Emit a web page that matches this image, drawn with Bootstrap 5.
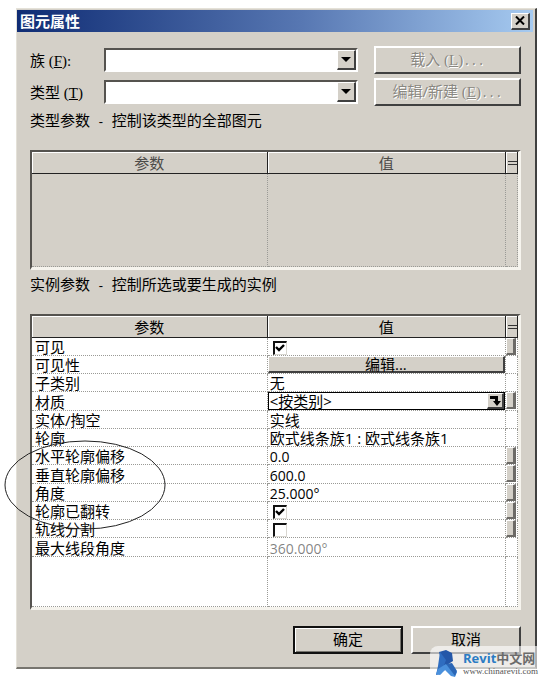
<!DOCTYPE html>
<html lang="zh-CN">
<head>
<meta charset="utf-8">
<meta name="viewport" content="width=device-width, initial-scale=1">
<title>图元属性</title>
<link href="https://cdn.jsdelivr.net/npm/bootstrap@5.3.0/dist/css/bootstrap.min.css" rel="stylesheet">
<style>
  :root { --face: #d4d0c8; --edge: #404040; --shade: #808080; --dots: #9a9a96; }
  body { background: #fff; color: #000; font: 15px/20px "Open Sans", "Noto Sans CJK SC", sans-serif; padding: 8px 11px 12px 16px; }
  .dialog-win { background: var(--face); border: solid; border-width: 1px 2px 2px 1px; border-color: #e4e1d8 var(--edge) #77756f #e4e1d8; }
  .title-strip { height: 22px; margin: 1px 2px 0 0; padding: 0 3px; background: linear-gradient(90deg, #0f2c74, #5777b2 55%, #a6caf0); color: #fff; }
  .title-strip h1 { font-size: 15px; line-height: 20px; font-weight: 700; }
  .dialog-body { padding: 14px 14px 13px 13px; }
  .raised { background: var(--face); color: #000; border: solid; border-width: 2px; border-color: #fff var(--edge) var(--edge) #fff; border-radius: 0; padding: 0; }
  .btn-close-x { width: 19px; height: 17px; border-width: 1px 2px 2px 1px; }
  .btn-close-x svg, .drop-arrow svg, .pick svg { display: block; margin: auto; }
  .field-label { width: 74px; }
  .latin { font-family: "Liberation Serif", serif; font-size: 15px; }
  .mono { font-family: "Liberation Mono", monospace; font-size: 12px; white-space: pre; }
  .combo { height: 24px; margin-right: 16px; }
  .combo select { appearance: none; width: 100%; height: 24px; background: #fff; border: solid; border-width: 2px; border-color: #55534f #fff #fff #55534f; border-radius: 0; }
  .drop-arrow { top: 2px; right: 2px; width: 19px; height: 20px; pointer-events: none; border-width: 1px 2px 2px 1px; }
  .side-btn { width: 147px; height: 28px; }
  .side-btn:disabled { color: #8a8882; text-shadow: 1px 1px 0 #fff; }
  .sunken { margin-top: 17px; border: solid; border-width: 2px 3px 3px 2px; border-color: #55534f #f6f4ee #f6f4ee #55534f; background: #fff; }
  .sunken.off { background: var(--face); }
  .off thead { color: #4c4b48; }
  .props { width: 100%; table-layout: fixed; border-collapse: separate; border-spacing: 0; }
  .props .c-name { width: 48.5%; }
  .props .c-eq { width: 12px; }
  .props th { height: 22px; line-height: 20px; font-weight: 400; text-align: center; padding: 0; background: var(--face); border: solid #222; border-width: 0 1px 1px 0; box-shadow: inset 1px 1px 0 #fff; }
  .props td { height: 18px; line-height: 15px; padding: 2px 0 0 2px; border: dotted var(--dots); border-width: 0 1px 1px 0; white-space: nowrap; }
  .props td:first-child { padding-left: 3px; }
  .props tbody tr:nth-child(4n) td { height: 19px; }
  .props td.num { font-size: 14px; }
  .props td.p-0 { vertical-align: top; }
  .props .filler td { height: 50px; }
  .off .filler td { height: 93px; }
  .eq-sign { display: block; height: 4px; margin-left: 2px; border: solid #333; border-width: 1px 0; }
  .assoc { display: block; width: 10px; height: 17px; border-width: 1px 3px 2px 1px; border-color: #fff #6c6a66 #6c6a66 #fff; }
  .edit-btn { display: block; width: 100%; height: 17px; line-height: 14px; border-width: 1px 2px 2px 1px; }
  .active-cell { border: 1px solid #000; height: 18px; }
  .active-cell input { border: 0; padding: 0 0 0 1px; min-width: 0; height: 16px; line-height: 16px; outline: 0; }
  .pick { width: 17px; height: 16px; border-width: 1px 2px 2px 1px; }
  .tick { appearance: none; display: block; width: 14px; height: 14px; margin: 0 0 0 3px; background: #fff center/10px 10px no-repeat; border: solid; border-width: 2px 1px 1px 2px; border-color: #111 #d8d6d0 #d8d6d0 #111; }
  .tick:checked { background-image: url("data:image/svg+xml,%3Csvg xmlns='http://www.w3.org/2000/svg' viewBox='0 0 10 10'%3E%3Cpath d='M1 4l3 3 5-5' fill='none' stroke='%23000' stroke-width='2.4'/%3E%3C/svg%3E"); }
  .cmd { width: 110px; height: 28px; padding-bottom: 2px; }
  .cmd.main { border-color: #111; box-shadow: inset 1px 1px 0 #fff, inset -1px -1px 0 #77756f; }
  .ring { left: -28px; top: 123px; width: 164px; height: 92px; pointer-events: none; }
  .brand { right: -2px; bottom: -13px; width: 107px; height: 34px; padding-left: 5px; background: rgba(255,255,255,.6); border-radius: 8px 0 0 0; }
  .brand-name { font: 700 13px/16px "Open Sans", "Noto Sans CJK SC", sans-serif; color: #2b7cc4; }
  .brand-name span { color: #6b6b6b; }
  .brand-url { font: 9px/10px "Liberation Serif", serif; color: #555; }
</style>
<script src="https://cdn.jsdelivr.net/npm/bootstrap@5.3.0/dist/js/bootstrap.bundle.min.js"></script>
</head>
<body>
<main class="dialog-win position-relative">
  <header class="title-strip d-flex align-items-center justify-content-between">
    <h1 class="m-0">图元属性</h1>
    <button type="button" class="raised btn-close-x" aria-label="关闭"><svg width="10" height="9" viewBox="0 0 10 9"><path d="M1 .5l8 8M9 .5l-8 8" stroke="#000" stroke-width="2"/></svg></button>
  </header>
  <div class="dialog-body">
    <div class="d-flex align-items-center">
      <label class="field-label" for="family">族<span class="latin"> (<u>F</u>):</span></label>
      <div class="combo position-relative flex-grow-1">
        <select id="family"><option></option></select>
        <span class="drop-arrow raised position-absolute d-flex align-items-center"><svg width="10" height="5" viewBox="0 0 10 5"><path d="M0 0h10L5 5z"/></svg></span>
      </div>
      <button type="button" class="raised side-btn" disabled>载入<span class="latin"> (<u>L</u>)</span><span class="mono">...</span></button>
    </div>
    <div class="d-flex align-items-center mt-1">
      <label class="field-label" for="kind">类型<span class="latin"> (<u>T</u>)</span></label>
      <div class="combo position-relative flex-grow-1">
        <select id="kind"><option></option></select>
        <span class="drop-arrow raised position-absolute d-flex align-items-center"><svg width="10" height="5" viewBox="0 0 10 5"><path d="M0 0h10L5 5z"/></svg></span>
      </div>
      <button type="button" class="raised side-btn" disabled>编辑/新建<span class="latin"> (<u>E</u>)</span><span class="mono">...</span></button>
    </div>
    <p class="mt-1 mb-0">类型参数<span class="mono"> - </span>控制该类型的全部图元</p>
    <div class="sunken off">
      <table class="props">
        <colgroup><col class="c-name"><col><col class="c-eq"></colgroup>
        <thead><tr><th>参数</th><th>值</th><th aria-label="关联"><span class="eq-sign"></span></th></tr></thead>
        <tbody><tr class="filler"><td></td><td></td><td></td></tr></tbody>
      </table>
    </div>
    <p class="mt-1 mb-0">实例参数<span class="mono"> - </span>控制所选或要生成的实例</p>
    <div class="sunken position-relative">
      <table class="props">
        <colgroup><col class="c-name"><col><col class="c-eq"></colgroup>
        <thead><tr><th>参数</th><th>值</th><th aria-label="关联"><span class="eq-sign"></span></th></tr></thead>
        <tbody>
          <tr><td><label for="visible">可见</label></td><td><input class="tick" type="checkbox" id="visible" checked></td><td class="p-0"><button type="button" class="raised assoc" aria-label="关联可见"></button></td></tr>
          <tr><td>可见性</td><td class="p-0"><button type="button" class="raised edit-btn">编辑...</button></td><td></td></tr>
          <tr><td>子类别</td><td>无</td><td></td></tr>
          <tr><td><label for="material">材质</label></td><td class="p-0"><div class="active-cell d-flex"><input class="flex-grow-1" type="text" id="material" value="&lt;按类别&gt;"><button type="button" class="raised pick" aria-label="选择材质"><svg width="12" height="11" viewBox="0 0 12 11"><path d="M1 1h8v5h3l-4 5-4-5h2V4H1z"/></svg></button></div></td><td class="p-0"><button type="button" class="raised assoc" aria-label="关联材质"></button></td></tr>
          <tr><td>实体/掏空</td><td>实线</td><td></td></tr>
          <tr><td>轮廓</td><td>欧式线条族1 : 欧式线条族1</td><td></td></tr>
          <tr><td>水平轮廓偏移</td><td class="num">0.0</td><td class="p-0"><button type="button" class="raised assoc" aria-label="关联水平轮廓偏移"></button></td></tr>
          <tr><td>垂直轮廓偏移</td><td class="num">600.0</td><td class="p-0"><button type="button" class="raised assoc" aria-label="关联垂直轮廓偏移"></button></td></tr>
          <tr><td>角度</td><td class="num">25.000°</td><td class="p-0"><button type="button" class="raised assoc" aria-label="关联角度"></button></td></tr>
          <tr><td><label for="flipped">轮廓已翻转</label></td><td><input class="tick" type="checkbox" id="flipped" checked></td><td class="p-0"><button type="button" class="raised assoc" aria-label="关联轮廓已翻转"></button></td></tr>
          <tr><td><label for="split">轨线分割</label></td><td><input class="tick" type="checkbox" id="split"></td><td class="p-0"><button type="button" class="raised assoc" aria-label="关联轨线分割"></button></td></tr>
          <tr><td>最大线段角度</td><td class="num text-black-50">360.000°</td><td></td></tr>
          <tr class="filler"><td></td><td></td><td></td></tr>
        </tbody>
      </table>
      <svg class="ring position-absolute" viewBox="0 0 164 92"><ellipse cx="81" cy="46" rx="80" ry="44" fill="none" stroke="#222"/></svg>
    </div>
    <div class="d-flex justify-content-end gap-2 mt-3">
      <button type="button" class="raised cmd main">确定</button>
      <button type="button" class="raised cmd">取消</button>
    </div>
  </div>
  <aside class="brand position-absolute d-flex">
    <svg width="24" height="28" viewBox="0 0 24 28" class="mt-1 flex-shrink-0"><path d="M4 2l7-2 6 3 1 8-6 4-3 6z" fill="#2457a8"/><path d="M5 2l6 8-5 14-5 1 2-9z" fill="#2f6dc0"/><path d="M1 24l2-5 8-5 11 8-2 5-4-1-6-6-5 5z" fill="#4a90dc"/><path d="M11 14l6-1 5 8-2 5z" fill="#2b66b5"/></svg>
    <div class="ms-1 mt-1">
      <div class="brand-name text-nowrap">Revit<span>中文网</span></div>
      <div class="brand-url">www.chinarevit.com</div>
    </div>
  </aside>
</main>
</body>
</html>
